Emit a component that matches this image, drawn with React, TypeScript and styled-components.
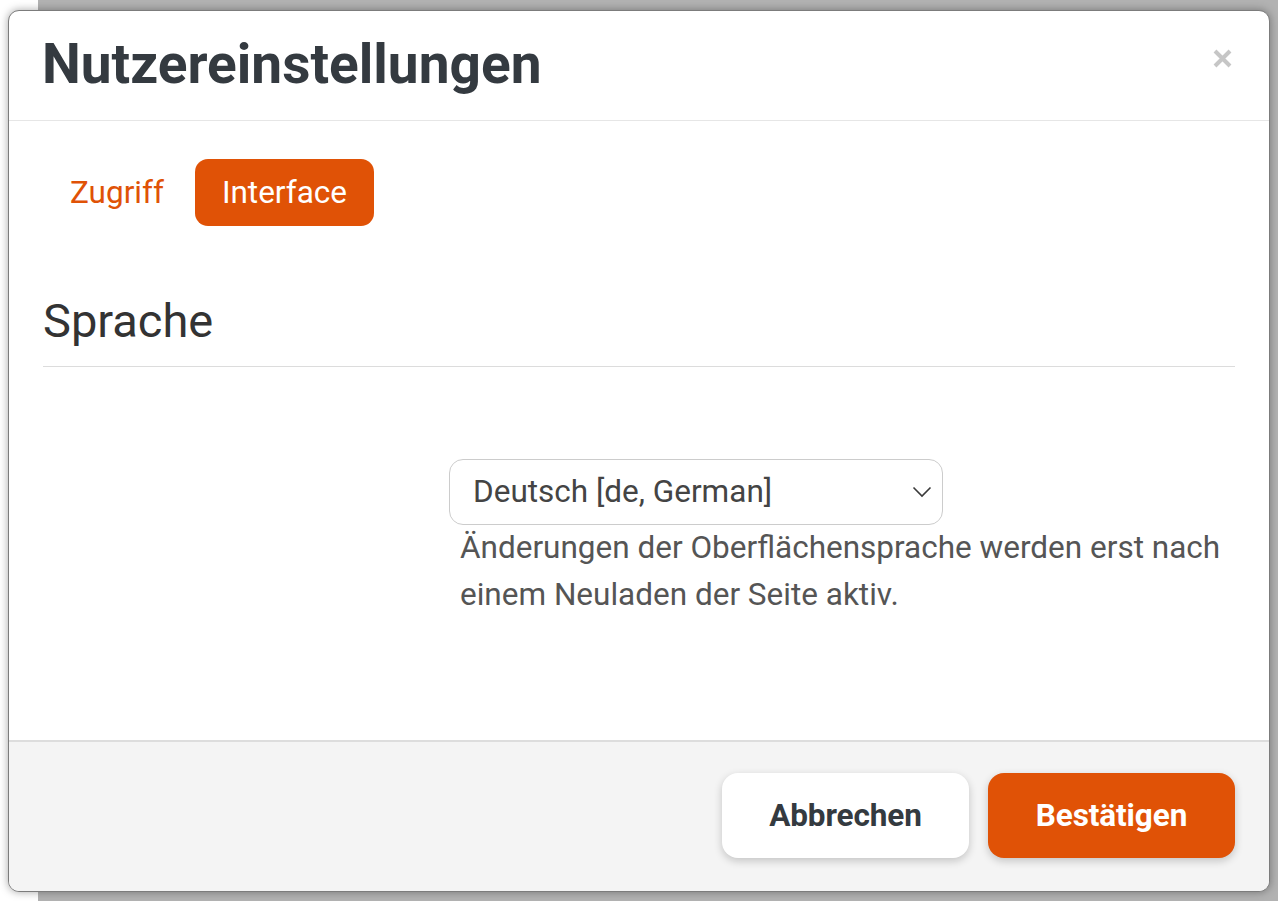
import styled, { createGlobalStyle } from "styled-components";

const GlobalStyle = createGlobalStyle`
  html, body {
    margin: 0;
    padding: 0;
  }

  body {
    font-family: Roboto, "Liberation Sans", Arial, sans-serif;
    background: linear-gradient(to right, #ffffff 38px, #b2b2b2 38px);
  }

  * {
    box-sizing: border-box;
  }
`;

const ORANGE = "#e05206";

export default function App() {
  return (
    <>
      <GlobalStyle />
      <StPage>
        <StModal role="dialog" aria-labelledby="userSettingsTitle">
          <StHeader>
            <StTitle id="userSettingsTitle">Nutzereinstellungen</StTitle>
            <StClose aria-label="Schließen">
              <svg width="19" height="19" viewBox="0 0 19 19">
                <path d="M2 2 L17 17 M17 2 L2 17" stroke="#c6c6c6" strokeWidth="4" />
              </svg>
            </StClose>
          </StHeader>

          <StBody>
            <StTabs>
              <StTab>Zugriff</StTab>
              <StTab active>Interface</StTab>
            </StTabs>

            <StSectionTitle>Sprache</StSectionTitle>

            <StFieldRow>
              <div />
              <StField>
                <StSelectWrapper>
                  <LabelHidden htmlFor="languageSelect">Sprache</LabelHidden>
                  <StSelect id="languageSelect" defaultValue="de">
                    <option value="de">Deutsch [de, German]</option>
                  </StSelect>
                  <StChevron width="20" height="12" viewBox="0 0 20 12">
                    <path d="M1.5 1.5 L10 10 L18.5 1.5" fill="none" stroke="#3a3a3a" strokeWidth="1.6" />
                  </StChevron>
                </StSelectWrapper>
                <StHelp>
                  Änderungen der Oberflächensprache werden erst nach einem Neuladen der Seite aktiv.
                </StHelp>
              </StField>
            </StFieldRow>
          </StBody>

          <StFooter>
            <StButton>Abbrechen</StButton>
            <StButton primary>Bestätigen</StButton>
          </StFooter>
        </StModal>
      </StPage>
    </>
  );
}

const StPage = styled.div`
  height: 901px;
  padding: 10px 8px 9px 8px;
`;

const StModal = styled.div`
  display: flex;
  flex-direction: column;

  width: 1262px;
  height: 882px;

  border: 1px solid #7c7c7c;
  border-radius: 11px;
  background-color: white;
  box-shadow: 0 0 9px rgba(0, 0, 0, 0.35);

  overflow: hidden;
`;

const StHeader = styled.header`
  display: flex;
  justify-content: space-between;
  align-items: flex-start;

  padding: 20px 37px 23px 33px;

  border-bottom: 1px solid #e6e6e6;
`;

const StTitle = styled.h1`
  margin: 0;

  font-weight: 700;
  font-size: 55px;
  line-height: 66px;

  color: #343a40;
`;

const StClose = styled.button`
  display: flex;

  margin-top: 18px;
  padding: 0;

  border: none;
  background: none;

  &:hover {
    cursor: pointer;
  }
`;

const StBody = styled.main`
  flex: 1;

  padding: 38px 34px 0 34px;
`;

const StTabs = styled.nav`
  display: flex;
  gap: 4px;
`;

const StTab = styled.button<{ active?: boolean }>`
  padding: 9.5px 27px;

  border: none;
  border-radius: 13px;
  background-color: ${({ active }) => (active ? ORANGE : "transparent")};

  font-family: inherit;
  font-weight: 400;
  font-size: 31.5px;
  line-height: 48px;

  color: ${({ active }) => (active ? "white" : ORANGE)};

  &:hover {
    cursor: pointer;
  }
`;

const StSectionTitle = styled.h2`
  margin: 67px 0 0 0;
  padding-bottom: 17px;

  border-bottom: 1px solid #dcdcdc;

  font-weight: 400;
  font-size: 47px;
  line-height: 56px;

  color: #333333;
`;

const StFieldRow = styled.div`
  display: grid;
  grid-template-columns: 406px 1fr;

  margin-top: 92px;
`;

const StField = styled.div`
  display: flex;
  flex-direction: column;
`;

const StSelectWrapper = styled.div`
  position: relative;

  width: 494px;
  height: 66px;
`;

const LabelHidden = styled.label`
  // visually hidden
  position: absolute;
  clip: rect(0 0 0 0);
  width: 1px;
  height: 1px;
  margin: -1px;
  overflow: hidden;
`;

const StSelect = styled.select`
  width: 100%;
  height: 100%;

  padding: 12px 50px 12px 23px;

  appearance: none;
  border: 1.5px solid #cccccc;
  border-radius: 14px;
  background-color: white;

  font-family: inherit;
  font-size: 31.5px;
  line-height: 40px;

  color: #444444;
`;

const StChevron = styled.svg`
  position: absolute;
  top: 27px;
  right: 11px;

  pointer-events: none;
`;

const StHelp = styled.p`
  margin: -1px 0 0 0;
  padding-left: 11px;

  font-size: 31.5px;
  line-height: 47px;

  color: #555555;
`;

const StFooter = styled.footer`
  display: flex;
  justify-content: flex-end;
  align-items: center;
  gap: 19px;

  height: 151px;
  padding: 0 34px 2px 0;

  border-top: 2px solid #dddddd;
  background-color: #f4f4f4;
`;

const StButton = styled.button<{ primary?: boolean }>`
  width: 247px;
  height: 85px;

  border: none;
  border-radius: 16px;
  background-color: ${({ primary }) => (primary ? ORANGE : "white")};
  box-shadow: 0 3px 9px rgba(0, 0, 0, 0.2);

  font-family: inherit;
  font-weight: 700;
  font-size: 31.5px;
  letter-spacing: -0.1px;

  color: ${({ primary }) => (primary ? "white" : "#343a40")};

  &:hover {
    cursor: pointer;
  }
`;
